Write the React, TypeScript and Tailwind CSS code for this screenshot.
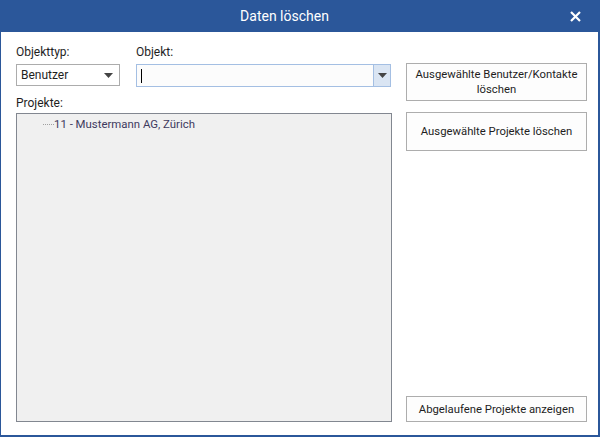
import React from 'react';

function Caret() {
  return (
    <svg width="9" height="5" viewBox="0 0 9 5" className="block">
      <path d="M0 0h9L4.5 5z" fill="#444" />
    </svg>
  );
}

export default function App() {
  const label = "h-4 text-[12px] leading-4 text-[#1e1e1e]";
  const btn = "w-[181px] border border-[#adadad] bg-[#fdfdfd] text-[11.3px] leading-[15px] text-[#1e1e1e] text-center";

  return (
    <div className="w-[600px] h-[437px] bg-white border-l border-r-2 border-b-2 border-[#2b579a] flex flex-col font-['Roboto','Liberation_Sans',sans-serif]">
      <div className="h-8 shrink-0 bg-[#2b579a] relative flex items-center justify-center">
        <span className="text-[14px] text-white pr-[30px]">Daten löschen</span>
        <svg width="11" height="11" viewBox="0 0 11 11" className="absolute right-[17px] top-[11px]">
          <path d="M1 1L10 10M10 1L1 10" stroke="#fff" strokeWidth="2.2" />
        </svg>
      </div>

      <div className="flex-1 flex pl-[15px] pt-3 pb-[13px]">
        <div className="w-[376px] flex flex-col">
          <div className="flex gap-4">
            <div className="w-[104px] flex flex-col">
              <div className={label}>Objekttyp:</div>
              <div className="mt-1 h-[22px] border border-[#acacac] bg-white flex items-center justify-between pl-1 pr-[6px]">
                <span className="text-[12px] text-[#1e1e1e]">Benutzer</span>
                <Caret />
              </div>
            </div>
            <div className="w-[255px] flex flex-col">
              <div className={label}>Objekt:</div>
              <div className="mt-1 h-[23px] border border-[#a4bfe3] bg-[#fcfcfc] flex">
                <div className="flex-1 flex items-center pl-1">
                  <span className="w-px h-[14px] bg-black" />
                </div>
                <div className="w-[17px] border-l border-[#a4bfe3] bg-[#dae5f3] flex items-center justify-center">
                  <Caret />
                </div>
              </div>
            </div>
          </div>

          <div className={label + " mt-2"}>Projekte:</div>
          <div className="mt-[2px] flex-1 border border-[#828790] bg-[#f0f0f0] pt-[2px]">
            <div className="flex items-center h-4 pl-[26px]">
              <span className="w-[11px] border-t border-dotted border-[#a0a0a0]" />
              <span className="text-[11.4px] leading-4 text-[#3e3a5e]">11 - Mustermann AG, Zürich</span>
            </div>
          </div>
        </div>

        <div className="ml-[14px] flex flex-col">
          <div className={btn + " mt-[19px] h-[38px] flex items-center justify-center px-1"}>
            Ausgewählte Benutzer/Kontakte löschen
          </div>
          <div className={btn + " mt-[11px] h-[39px] flex items-center justify-center"}>
            Ausgewählte Projekte löschen
          </div>
          <div className="flex-1" />
          <div className={btn + " h-[26px] flex items-center justify-center"}>
            Abgelaufene Projekte anzeigen
          </div>
        </div>
      </div>
    </div>
  );
}
